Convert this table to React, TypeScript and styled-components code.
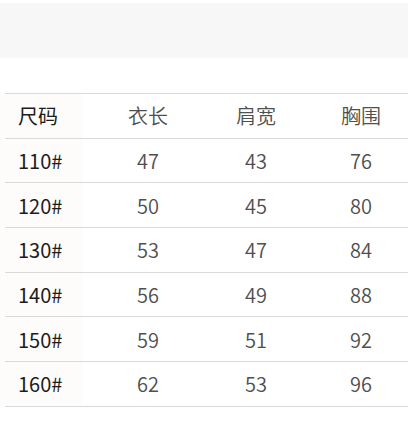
import React from "react";
import styled, { createGlobalStyle } from "styled-components";

const Global = createGlobalStyle`
  html, body { margin: 0; padding: 0; background: #ffffff; }
  body { font-family: "Noto Sans CJK SC", "Noto Sans", sans-serif; }
`;

const Page = styled.div`
  width: 408px;
  height: 428px;
  overflow: hidden;
  padding-top: 3px;
  box-sizing: border-box;
`;

const Band = styled.div`
  height: 55px;
  background: #f7f7f7;
`;

const Table = styled.div`
  margin-top: 35px;
  margin-left: 5px;
  border-top: 1px solid #d9d9d9;
`;

const Row = styled.div`
  display: grid;
  grid-template-columns: 77px 132px 84px 126px;
  height: 44.7px;
  box-sizing: border-box;
  border-bottom: 1px solid #d9d9d9;
  align-items: stretch;
`;

const SizeCell = styled.div`
  margin-left: -5px;
  padding-left: 18px;
  background: #fdfcfa;
  color: #1c1c1c;
  font-size: 20px;
  font-weight: 400;
  display: flex;
  align-items: center;
`;

const Cell = styled.div`
  color: #4f4f4f;
  font-size: 20px;
  font-weight: 350;
  display: flex;
  align-items: center;
  justify-content: center;
`;

const header = ["尺码", "衣长", "肩宽", "胸围"];
const rows = [
  ["110#", "47", "43", "76"],
  ["120#", "50", "45", "80"],
  ["130#", "53", "47", "84"],
  ["140#", "56", "49", "88"],
  ["150#", "59", "51", "92"],
  ["160#", "62", "53", "96"],
];

export default function App() {
  return (
    <Page>
      <Global />
      <Band />
      <Table>
        {[header, ...rows].map((r, i) => (
          <Row key={i}>
            <SizeCell>{r[0]}</SizeCell>
            <Cell>{r[1]}</Cell>
            <Cell>{r[2]}</Cell>
            <Cell>{r[3]}</Cell>
          </Row>
        ))}
      </Table>
    </Page>
  );
}
